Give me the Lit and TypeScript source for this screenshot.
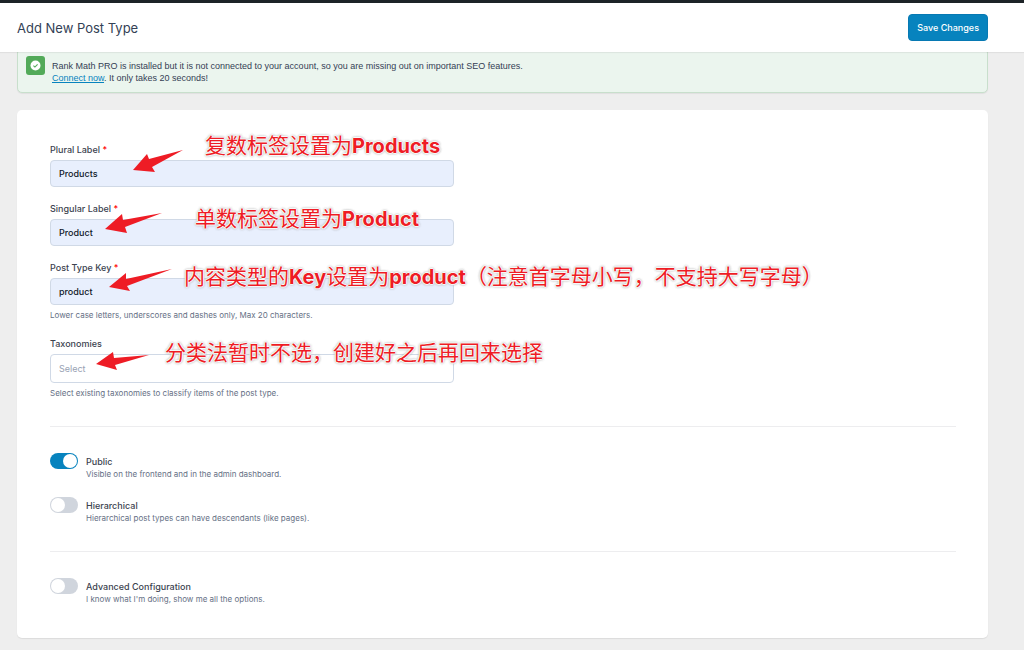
import { LitElement, html, css, svg } from "lit";
import { customElement } from "lit/decorators.js";
import { classMap } from "lit/directives/class-map.js";

interface Field {
  id: string;
  label: string;
  value: string;
  required?: boolean;
  select?: boolean;
  help?: string;
  arrow: string;
  note: unknown;
}

interface Toggle {
  id: string;
  label: string;
  help: string;
  on: boolean;
}

const FIELDS: Field[] = [
  {
    id: "plural",
    label: "Plural Label",
    value: "Products",
    required: true,
    arrow: "133,6 99,15 97,10 83,26 105,28 102,23",
    note: html`复数标签设置为<b>Products</b>`,
  },
  {
    id: "singular",
    label: "Singular Label",
    value: "Product",
    required: true,
    arrow: "112,10 73,17 72,11 55,26 77,30 75,24",
    note: html`单数标签设置为<b>Product</b>`,
  },
  {
    id: "key",
    label: "Post Type Key",
    value: "product",
    required: true,
    help: "Lower case letters, underscores and dashes only, Max 20 characters.",
    arrow: "122,7 76,17 76,11 59,25 80,29 77,24",
    note: html`内容类型的<b>Key</b>设置为<b>product</b>（注意首字母小写，不支持大写字母）`,
  },
  {
    id: "taxonomies",
    label: "Taxonomies",
    value: "Select",
    select: true,
    help: "Select existing taxonomies to classify items of the post type.",
    arrow: "99,17 64,20 63,14 46,26 67,32 65,27",
    note: html`分类法暂时不选，创建好之后再回来选择`,
  },
];

const VISIBILITY: Toggle[] = [
  { id: "public", label: "Public", help: "Visible on the frontend and in the admin dashboard.", on: true },
  { id: "hierarchical", label: "Hierarchical", help: "Hierarchical post types can have descendants (like pages).", on: false },
];

const ADVANCED: Toggle[] = [
  { id: "advanced", label: "Advanced Configuration", help: "I know what I'm doing, show me all the options.", on: false },
];

@customElement("app-root")
export class AppRoot extends LitElement {
  static styles = css`
    :host {
      display: block;
      min-height: 100vh;
      background: #eee;
      color: #3c434f;
      font: 9px/12px Inter, "Noto Sans CJK SC", sans-serif;
    }
    * {
      box-sizing: border-box;
    }
    .header {
      position: relative;
      z-index: 1;
      display: flex;
      align-items: center;
      justify-content: space-between;
      height: 52px;
      padding: 0 36px 0 17px;
      background: #fff;
      border-top: 3px solid #1d2327;
      box-shadow: 0 1px 1px rgba(0, 0, 0, 0.06);
    }
    .title {
      margin: 0;
      font-size: 13px;
      line-height: 20px;
      font-weight: 400;
      color: #334155;
    }
    .save {
      height: 27px;
      padding: 0 8px;
      border: 1px solid #0779b3;
      border-radius: 4px;
      background: #0783be;
      color: #fff;
      font: 500 9px/12px Inter, sans-serif;
    }
    .content {
      padding: 0 36px 12px 17px;
    }
    .notice {
      display: flex;
      gap: 7px;
      margin-top: -4px;
      padding: 7px 8px 8px;
      border: 1px solid #c8dfcc;
      border-radius: 5px;
      background: #ebf5ee;
      box-shadow: 0 1px 1px rgba(0, 0, 0, 0.06);
      color: #344054;
      font-family: "Liberation Sans", sans-serif;
    }
    .notice-icon {
      flex: none;
      width: 19px;
      height: 19px;
    }
    .notice-text {
      margin: 4px 0 0;
    }
    .link {
      color: #0783be;
      text-decoration: underline;
    }
    .card {
      margin-top: 17px;
      padding: 34px 32px 32px 33px;
      border-radius: 5px;
      background: #fff;
      box-shadow: 0 1px 1px rgba(0, 0, 0, 0.08);
    }
    .fields {
      display: grid;
      grid-template-columns: minmax(0, 404px);
      gap: 16px;
    }
    .field {
      position: relative;
      display: flex;
      flex-direction: column;
      gap: 4px;
    }
    .label {
      font-weight: 500;
    }
    .star {
      color: #f00;
    }
    .input {
      width: 100%;
      height: 27px;
      margin: 0;
      padding: 0 8px;
      border: 1px solid #d0d9e6;
      border-radius: 4px;
      background: #e8effd;
      color: #101828;
      font: 500 9px/12px Inter, sans-serif;
      appearance: none;
      outline: none;
    }
    .input.select {
      height: 29px;
      background: #fff;
      color: #98a2b3;
      font-weight: 400;
    }
    .help {
      margin: 0;
      font-size: 8px;
      line-height: 13px;
      color: #667085;
    }
    .arrow {
      position: absolute;
      top: 0;
      left: 0;
      width: 140px;
      height: 40px;
      fill: #ee1c25;
      pointer-events: none;
    }
    .note {
      position: absolute;
      top: 0;
      left: 0;
      font: 400 21px/28px Inter, "Noto Sans CJK SC", sans-serif;
      white-space: nowrap;
      color: #ee1c25;
      text-shadow: 1px 0 1px #fff, -1px 0 1px #fff, 0 1px 1px #fff, 0 -1px 1px #fff, 0 0 3px #999, 0 0 3px #999,
        0 0 2px #bbb;
      pointer-events: none;
    }
    .note b {
      font-size: 20px;
      font-weight: 700;
    }
    .note.plural {
      top: -12px;
      left: 155px;
    }
    .note.singular {
      top: 2px;
      left: 145px;
    }
    .note.key {
      top: 1px;
      left: 134px;
    }
    .note.taxonomies {
      top: 1px;
      left: 115px;
    }
    .rule {
      height: 1px;
      margin: 26px 0;
      border: 0;
      background: #ededef;
    }
    .toggles {
      display: grid;
      gap: 16px;
    }
    .toggle {
      display: grid;
      grid-template-columns: 28px 1fr;
      column-gap: 8px;
    }
    .switch {
      grid-row: span 2;
      width: 28px;
      height: 16px;
      margin: 0;
      padding: 1px;
      border-radius: 8px;
      background: #d0d5dd;
      appearance: none;
    }
    .switch::before {
      content: "";
      display: block;
      width: 14px;
      height: 14px;
      border-radius: 50%;
      background: #fff;
    }
    .switch:checked {
      background: #0783be;
    }
    .switch:checked::before {
      margin-left: 12px;
    }
    .toggle .label {
      padding-top: 3px;
    }
  `;

  private renderField(f: Field) {
    return html`
      <div class="field">
        <label class="label" for=${f.id}>${f.label}${f.required ? html` <span class="star">*</span>` : ""}</label>
        ${f.select
          ? html`<select class="input select" id=${f.id}><option>${f.value}</option></select>`
          : html`<input class="input" id=${f.id} type="text" .value=${f.value} />`}
        ${f.help ? html`<p class="help">${f.help}</p>` : ""}
        <svg class="arrow" viewBox="0 0 140 40" aria-hidden="true">${svg`<polygon points=${f.arrow}></polygon>`}</svg>
        <span class=${classMap({ note: true, [f.id]: true })}>${f.note}</span>
      </div>
    `;
  }

  private renderToggles(items: Toggle[]) {
    return html`
      <div class="toggles">
        ${items.map(
          (t) => html`
            <div class="toggle">
              <input class="switch" id=${t.id} type="checkbox" ?checked=${t.on} />
              <label class="label" for=${t.id}>${t.label}</label>
              <p class="help">${t.help}</p>
            </div>
          `
        )}
      </div>
    `;
  }

  render() {
    return html`
      <header class="header">
        <h1 class="title">Add New Post Type</h1>
        <button class="save" type="button">Save Changes</button>
      </header>
      <main class="content">
        <div class="notice">
          <svg class="notice-icon" viewBox="0 0 19 19" aria-hidden="true">
            <rect width="19" height="19" rx="3" fill="#52aa59"></rect>
            <circle cx="9.5" cy="9.5" r="5" fill="#fff"></circle>
            <path d="M7.4 9.7l1.5 1.4 2.7-2.8" fill="none" stroke="#52aa59" stroke-width="1.1"></path>
          </svg>
          <p class="notice-text">
            Rank Math PRO is installed but it is not connected to your account, so you are missing out on important SEO
            features.<br /><a class="link" href="#">Connect now</a>. It only takes 20 seconds!
          </p>
        </div>
        <form class="card">
          <div class="fields">${FIELDS.map((f) => this.renderField(f))}</div>
          <hr class="rule" />
          ${this.renderToggles(VISIBILITY)}
          <hr class="rule" />
          ${this.renderToggles(ADVANCED)}
        </form>
      </main>
    `;
  }
}
